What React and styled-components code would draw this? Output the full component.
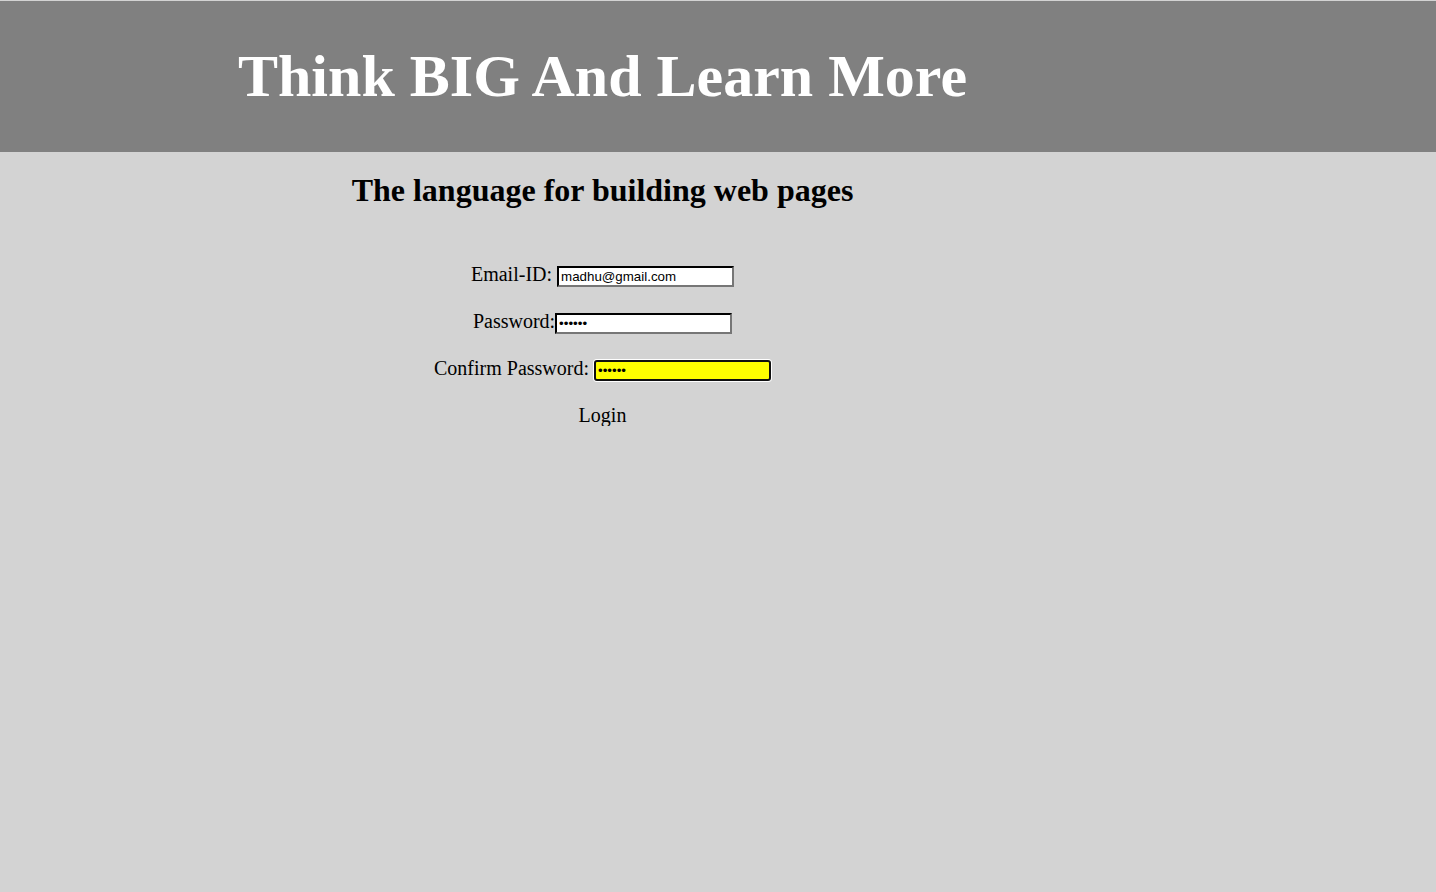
import styled, { createGlobalStyle } from "styled-components";

const GlobalStyle = createGlobalStyle`
  html, body {
    margin: 0;
    padding: 0;
    background: #d3d3d3;
  }
  body {
    padding-top: 1px;
    font-family: "Liberation Serif", "Times New Roman", serif;
    color: #000;
  }
`;

const Header = styled.header`
  height: 151px;
  background: #808080;
  display: flex;
  align-items: center;
`;

const Inner = styled.div`
  width: 1205px;
  text-align: center;
`;

const Title = styled.h1`
  margin: 0;
  font-size: 60px;
  font-weight: bold;
  color: #fff;
`;

const Subtitle = styled.h2`
  margin: 20px 0 0;
  font-size: 32px;
  line-height: 36px;
  font-weight: bold;
`;

const Form = styled.form`
  margin-top: 55px;
  display: flex;
  flex-direction: column;
  gap: 23px;
  font-size: 20px;
`;

const Row = styled.div`
  text-align: center;
  line-height: 22px;
`;

const Field = styled.input`
  width: 169px;
  height: 15px;
  padding: 1px 2px;
  box-sizing: content-box;
  font-family: "Liberation Sans", Arial, sans-serif;
  font-size: 13.33px;
  border: 2px inset #767676;
  border-top-color: #1f1f1f;
  border-left-color: #1f1f1f;
  background: ${(p) => (p.$highlight ? "#ffff00" : "#fff")};
  color: #000;
  outline: none;
  vertical-align: baseline;

  ${(p) =>
    p.$highlight &&
    `
    border: 2px solid #101010;
    border-radius: 3px;
    box-shadow: 0 0 0 1px #fff;
  `}
`;

const LoginButton = styled.button`
  background: none;
  border: none;
  padding: 0;
  font: inherit;
  color: #000;
  cursor: pointer;
`;

export default function App() {
  return (
    <>
      <GlobalStyle />
      <Header>
        <Inner>
          <Title>Think BIG And Learn More</Title>
        </Inner>
      </Header>
      <Inner>
        <Subtitle>The language for building web pages</Subtitle>
        <Form onSubmit={(e) => e.preventDefault()}>
          <Row>
            Email-ID: <Field type="email" defaultValue="madhu@gmail.com" />
          </Row>
          <Row>
            Password:<Field type="password" defaultValue="123456" />
          </Row>
          <Row>
            Confirm Password:{" "}
            <Field type="password" defaultValue="123456" $highlight />
          </Row>
          <Row>
            <LoginButton type="submit">Login</LoginButton>
          </Row>
        </Form>
      </Inner>
    </>
  );
}
